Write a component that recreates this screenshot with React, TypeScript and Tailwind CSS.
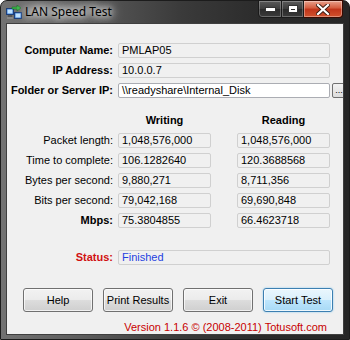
import React from "react";

const font = "font-['Liberation_Sans','DejaVu_Sans',sans-serif]";

function Field({ value, w = "w-[212px]", white = false, blue = false }: { value: string; w?: string; white?: boolean; blue?: boolean }) {
  return (
    <div
      className={`${w} h-[15px] shrink-0 flex items-center pl-[3px] rounded-[2px] border ${
        white ? "bg-white border-[#abadb3]" : "bg-[#f0f0f0] border-[#d0d0d0]"
      } ${blue ? "text-[#1f3fe0]" : "text-black"} text-[11px] leading-none whitespace-nowrap overflow-hidden`}
    >
      {value}
    </div>
  );
}

function Row({ label, bold = false, red = false, children }: { label: string; bold?: boolean; red?: boolean; children: React.ReactNode }) {
  return (
    <div className="flex items-center h-[15px] gap-[5px]">
      <div
        className={`w-[106px] shrink-0 text-right text-[11px] leading-none whitespace-nowrap ${bold ? "font-bold" : ""} ${
          red ? "text-[#d01010]" : "text-black"
        }`}
      >
        {label}
      </div>
      {children}
    </div>
  );
}

function Btn({ label, primary = false }: { label: string; primary?: boolean }) {
  return (
    <div
      className={`w-[70px] h-[24px] flex items-center justify-center rounded-[3px] border text-[11px] text-black ${
        primary
          ? "border-[#3c7fb1] bg-[linear-gradient(#eaf6fd,#d9f0fc_50%,#bee6fd_50%,#a7d9f5)] shadow-[inset_0_0_0_1px_rgba(255,255,255,0.8),0_0_2px_#7fc4ee]"
          : "border-[#707070] bg-[linear-gradient(#f2f2f2,#ebebeb_50%,#dddddd_50%,#cfcfcf)] shadow-[inset_0_0_0_1px_rgba(255,255,255,0.7)]"
      }`}
    >
      {label}
    </div>
  );
}

function AppIcon() {
  return (
    <svg width="16" height="16" viewBox="0 0 16 16">
      <rect x="0.5" y="3.5" width="7" height="6" fill="#3a7bd5" stroke="#1c3f7a" />
      <rect x="1.5" y="4.5" width="5" height="4" fill="#bfe3ff" />
      <rect x="8.5" y="7.5" width="7" height="6" fill="#3a7bd5" stroke="#1c3f7a" />
      <rect x="9.5" y="8.5" width="5" height="4" fill="#bfe3ff" />
      <rect x="2" y="10" width="4" height="2" fill="#555" />
      <rect x="1" y="12" width="6" height="2" fill="#888" />
      <path d="M6 2 L11 2 L11 0 L15 3 L11 6 L11 4 L6 4 Z" fill="#3bb54a" stroke="#1d6e27" strokeWidth="0.6" />
    </svg>
  );
}

export default function App() {
  return (
    <div className={`w-[350px] h-[340px] ${font}`}>
      <div className="w-[350px] h-[340px] flex flex-col rounded-t-[7px] border border-[#1c1c1c] bg-[linear-gradient(to_right,#727272,#5e5e5e_22%,#3a3a3a_52%,#2b2b2b_75%,#262626)] px-[5px] pb-[4px]">
        <div className="h-[22px] flex items-start shrink-0">
          <div className="pt-[4px]">
            <AppIcon />
          </div>
          <div className="ml-[3px] pt-[5px] text-[12px] leading-none text-black font-['Noto_Sans',sans-serif] [text-shadow:0_0_6px_#fff,0_0_10px_#fff,0_0_14px_#fff]">
            LAN Speed Test
          </div>
          <div className="ml-auto flex h-[18px] -mt-[1px] mr-[1px]">
            <div className="w-[24px] h-[18px] border border-[#1a1a1a] rounded-bl-[4px] bg-[linear-gradient(#5a5a5a,#3c3c3c_50%,#2a2a2a_50%,#3a3a3a)] shadow-[inset_0_0_0_1px_rgba(255,255,255,0.25)] flex items-end justify-center pb-[5px]">
              <div className="w-[9px] h-[3px] bg-white border border-[#333] box-content" />
            </div>
            <div className="w-[22px] h-[18px] border-y border-r border-[#1a1a1a] bg-[linear-gradient(#5a5a5a,#3c3c3c_50%,#2a2a2a_50%,#3a3a3a)] shadow-[inset_0_0_0_1px_rgba(255,255,255,0.25)] flex items-center justify-center">
              <div className="w-[8px] h-[6px] border-2 border-t-[3px] border-white outline outline-1 outline-[#333]" />
            </div>
            <div className="w-[39px] h-[18px] border-y border-r border-[#3a0a00] rounded-br-[4px] bg-[linear-gradient(#e8a08c,#d45a3c_45%,#c0341a_50%,#d0522e)] shadow-[inset_0_0_0_1px_rgba(255,255,255,0.35)] flex items-center justify-center">
              <svg width="14" height="11" viewBox="0 0 14 11">
                <path d="M2 1 L12 10 M12 1 L2 10" stroke="#3a1a10" strokeWidth="4" strokeLinecap="square" />
                <path d="M2 1 L12 10 M12 1 L2 10" stroke="#fff" strokeWidth="2.2" strokeLinecap="square" />
              </svg>
            </div>
          </div>
        </div>
        <div className="flex-1 border border-[#3f3f3f] bg-[#f0f0f0] overflow-hidden flex flex-col">
          <div className="pt-[19px] flex flex-col gap-[5px]">
            <Row label="Computer Name:" bold>
              <Field value="PMLAP05" />
            </Row>
            <Row label="IP Address:" bold>
              <Field value="10.0.0.7" />
            </Row>
            <Row label="Folder or Server IP:" bold>
              <Field value="\\readyshare\Internal_Disk" white />
              <div className="w-[14px] h-[15px] -ml-[3px] shrink-0 rounded-[2px] border border-[#707070] bg-[linear-gradient(#f2f2f2,#dddddd)] text-[9px] leading-none flex items-end justify-center pb-[2px]">
                ...
              </div>
            </Row>
          </div>
          <div className="mt-[15px] flex h-[14px] items-center text-[11px] font-bold text-black">
            <div className="w-[111px]" />
            <div className="w-[93px] text-center">Writing</div>
            <div className="w-[26px]" />
            <div className="w-[93px] text-center">Reading</div>
          </div>
          <div className="mt-[6px] flex flex-col gap-[5px]">
            {[
              ["Packet length:", "1,048,576,000", "1,048,576,000", false],
              ["Time to complete:", "106.1282640", "120.3688568", false],
              ["Bytes per second:", "9,880,271", "8,711,356", false],
              ["Bits per second:", "79,042,168", "69,690,848", false],
              ["Mbps:", "75.3804855", "66.4623718", true],
            ].map(([l, a, b, bold]) => (
              <Row key={l as string} label={l as string} bold={bold as boolean}>
                <Field value={a as string} w="w-[93px]" />
                <div className="w-[16px] shrink-0" />
                <Field value={b as string} w="w-[93px]" />
              </Row>
            ))}
          </div>
          <div className="mt-[22px]">
            <Row label="Status:" bold red>
              <Field value="Finished" blue />
            </Row>
          </div>
          <div className="mt-[23px] flex pl-[16px] gap-[10px]">
            <Btn label="Help" />
            <Btn label="Print Results" />
            <Btn label="Exit" />
            <Btn label="Start Test" primary />
          </div>
          <div className="mt-[9px] pr-[16px] text-right text-[11px] leading-[13px] text-[#c80000] whitespace-nowrap">
            Version 1.1.6 © (2008-2011) Totusoft.com
          </div>
        </div>
      </div>
    </div>
  );
}
